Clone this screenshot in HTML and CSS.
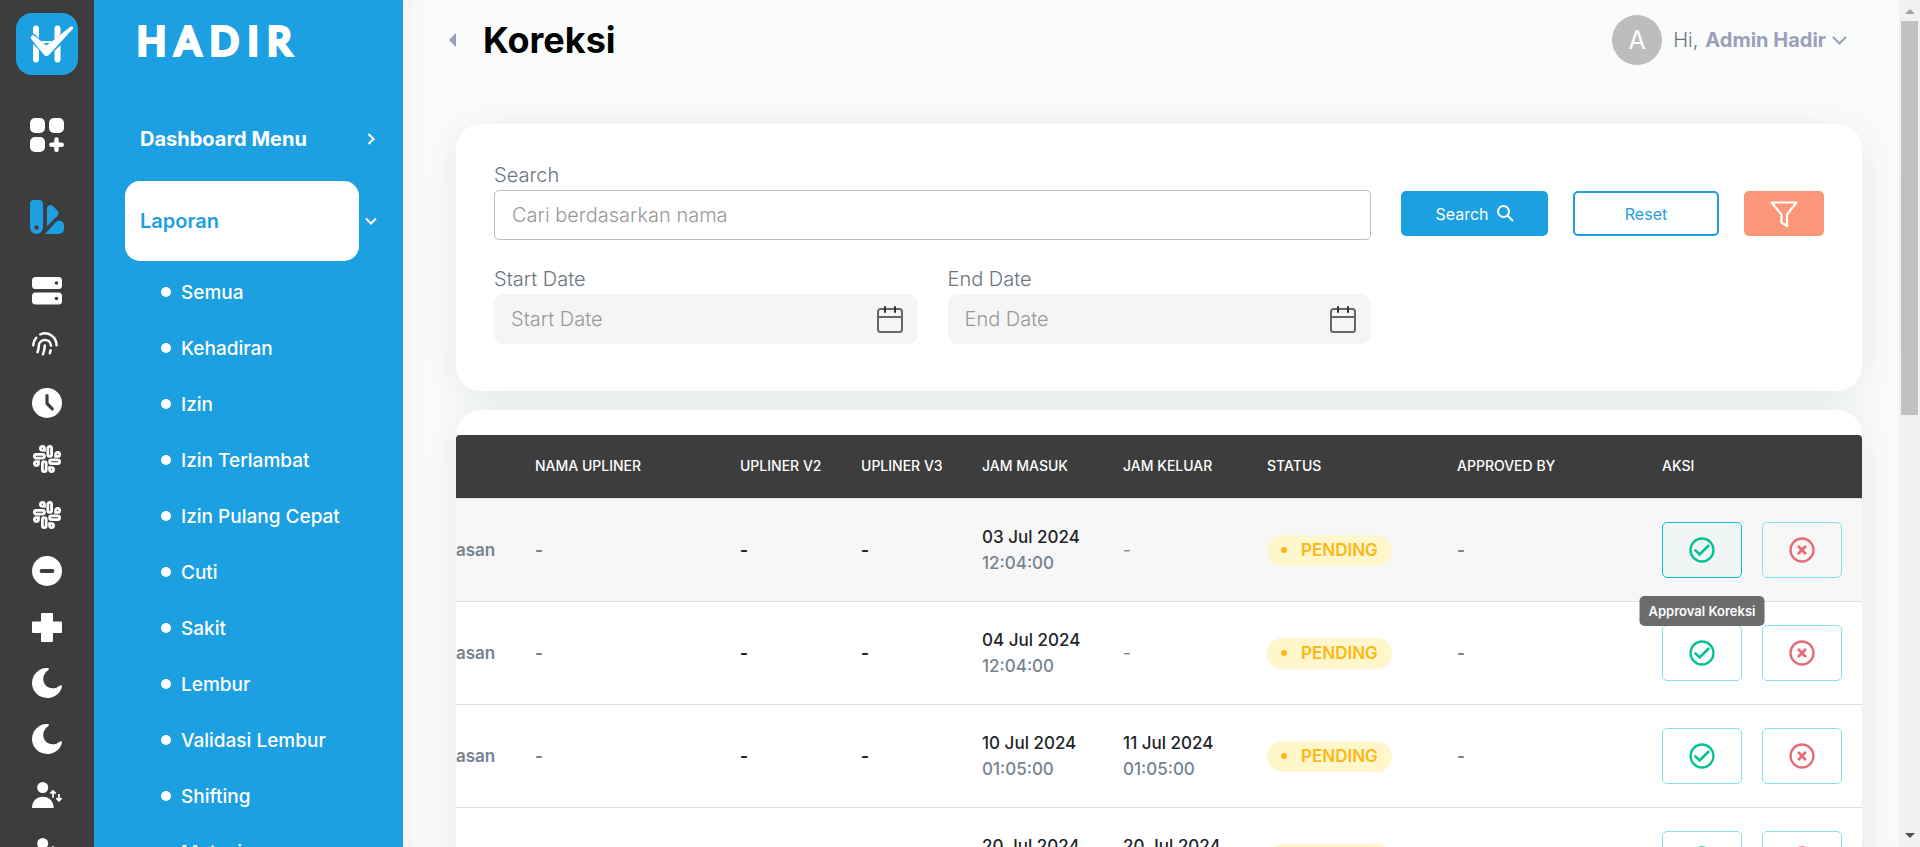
FILE: index.html
```html
<!DOCTYPE html>
<html lang="id">
<head>
<meta charset="utf-8">
<meta name="viewport" content="width=device-width, initial-scale=1">
<title>Koreksi</title>
<link rel="stylesheet" href="styles.css">
</head>
<body>
<svg class="defs" aria-hidden="true">
  <symbol id="slack" viewBox="0 0 28 28">
    <g fill="none" stroke="#fff" stroke-width="2.800">
      <rect x="14.8" y="1.4" width="3.800" height="10" rx="1.900"/><rect x="16.6" y="14.8" width="10" height="3.800" rx="1.900"/>
      <rect x="9.4" y="16.6" width="3.800" height="10" rx="1.900"/><rect x="1.4" y="9.4" width="10" height="3.800" rx="1.900"/>
      <path d="M11.4 5.4H9.4a2 2 0 1 1 2-2zM22.6 11.4V9.4a2 2 0 1 1 2 2zM16.6 22.6h2a2 2 0 1 1-2 2zM5.4 16.6v2a2 2 0 1 1-2-2z"/>
    </g>
  </symbol>
  <symbol id="moon" viewBox="0 0 30 30"><path fill="#fff" d="M15 0c1.6 0 2.500.6 1.500 1.900C12.500 4.500 11.300 8 11.300 11c0 5.500 4.200 9.300 9.200 9.300 3 0 5-1 7.300-2.600 1.500-1 2.500-.4 2.100 1.200C28.200 25.500 22.300 30 15 30A15 15 0 0 1 15 0z"/></symbol>
  <symbol id="shift" viewBox="0 0 30 26">
    <circle cx="10.700" cy="5.500" r="5.500" fill="#fff"/><path fill="#fff" d="M0 26c0-7 4.500-11.300 10.800-11.300S21.600 19 21.600 26z"/>
    <path fill="none" stroke="#fff" stroke-width="1.700" d="M21 15.800V9M18.300 11.600 21 8.900l2.700 2.700M27 12v6.600M24.300 16.200l2.700 2.700 2.700-2.700"/>
  </symbol>
  <symbol id="check" viewBox="0 0 26 26"><g fill="none" stroke="#00c292" stroke-width="2.300"><circle cx="13" cy="13" r="11.500"/><path stroke-width="2.600" stroke-linecap="round" d="M6.400 13.400l4.200 4 8.800-8.600"/></g></symbol>
  <symbol id="cross" viewBox="0 0 26 26"><g fill="none" stroke="#e46a76" stroke-width="2.300"><circle cx="13" cy="13" r="11.500"/><path stroke-width="2.800" stroke-linecap="round" d="M9.800 9.800l6.400 6.400M16.200 9.800l-6.400 6.400"/></g></symbol>
  <symbol id="calendar" viewBox="0 0 26 29"><path fill="none" stroke="#666" stroke-width="2" d="M3.500 4h19a2.500 2.500 0 0 1 2.500 2.500v18a2.500 2.500 0 0 1-2.500 2.500h-19A2.500 2.500 0 0 1 1 24.500v-18A2.500 2.500 0 0 1 3.500 4zM1 12h24"/><path stroke="#333" stroke-width="2" stroke-linecap="round" d="M8 2v5M18 2v5"/></symbol>
</svg>

<nav class="rail" aria-label="Modul">
  <a class="brand" href="#" aria-label="Hadir">
    <svg width="62" height="62" viewBox="0 0 62 62"><rect width="62" height="62" rx="16" fill="#1ca0e2"/>
      <path stroke="#fff" stroke-width="6" stroke-linecap="round" d="M20 15.500v31M41.500 15.500v31"/><path stroke="#fff" stroke-width="2" d="M26 29h9"/>
      <path fill="none" stroke="#1ca0e2" stroke-width="8" stroke-linejoin="round" stroke-linecap="round" d="M17 25l14 14.500L55 16.500"/>
      <path fill="#fff" d="M15.200 23.400c1-1.500 2.600-1.300 3.800-.2l11.500 9.200 24-18.600c1.800-1.200 3.500.6 2.200 2.200L33.400 41.500c-1.800 2-3.900 2-5.700 0L15.800 26.800c-.9-1.200-1.200-2.200-.6-3.400z"/></svg>
  </a>
  <a class="rail-lg" href="#" aria-label="Dashboard"><svg width="34" height="34" viewBox="0 0 34 34" fill="#fff"><rect width="15" height="15" rx="5"/><rect x="19" width="15" height="15" rx="5"/><rect y="19" width="15" height="15" rx="5"/><path stroke="#fff" stroke-width="4.500" stroke-linecap="round" d="M26.500 21.500v10.300M21.400 26.700h10.300"/></svg></a>
  <a class="rail-lg" href="#" aria-label="Laporan"><svg width="34" height="34" viewBox="0 0 34 34" fill="#1ca0e2"><path fill-rule="evenodd" d="M4 0h5a4 4 0 0 1 4 4v23.500a6.500 6.500 0 0 1-13 0V4a4 4 0 0 1 4-4zm2.500 25.200a2.200 2.200 0 1 0 0 4.400 2.200 2.200 0 0 0 0-4.400zM17 8.500c0-3 3.500-4.500 6-2.500l4 4.300c2 2 2 3.800.3 5.600L17 26.300zM27 20.800h2.500a4.500 4.500 0 0 1 4.500 4.500V29a5 5 0 0 1-5 5H15z"/></svg></a>
  <div class="rail-list">
    <a class="rail-sm" href="#" aria-label="Semua"><svg width="30" height="28" viewBox="0 0 30 28"><rect width="30" height="12" rx="3.500" fill="#fff"/><rect y="15.500" width="30" height="12" rx="3.500" fill="#fff"/><circle cx="24.500" cy="6" r="1.800" fill="#3d3d3d"/><circle cx="24.500" cy="21.500" r="1.800" fill="#3d3d3d"/></svg></a>
    <a class="rail-sm finger" href="#" aria-label="Kehadiran"><svg width="26" height="24" viewBox="0 0 26 24" fill="none" stroke="#fff" stroke-width="2.500" stroke-linecap="round"><path d="M1.300 13.300c.1-3 1-5.300 2.900-7.500M8.300 2.400c8.200-3.400 16.300 2.600 16.200 10.900M5.500 20.200c1-2 1.200-3.800 1.300-6.500.3-7 11.600-8 12.200 0M11 22.300c1.200-3 1.700-5.500 1.800-8.700M18.600 18.300l-.8 2.900"/></svg></a>
    <a class="rail-sm" href="#" aria-label="Izin"><svg width="30" height="30" viewBox="0 0 30 30"><circle cx="15" cy="15" r="15" fill="#fff"/><path fill="none" stroke="#3d3d3d" stroke-width="3.200" stroke-linecap="round" stroke-linejoin="round" d="M15 7.500v8l5.300 5.300"/></svg></a>
    <a class="rail-sm" href="#" aria-label="Izin Terlambat"><svg width="28" height="28"><use href="#slack"/></svg></a>
    <a class="rail-sm" href="#" aria-label="Izin Pulang Cepat"><svg width="28" height="28"><use href="#slack"/></svg></a>
    <a class="rail-sm" href="#" aria-label="Cuti"><svg width="30" height="30" viewBox="0 0 30 30"><circle cx="15" cy="15" r="15" fill="#fff"/><path stroke="#3d3d3d" stroke-width="3.800" stroke-linecap="round" d="M9.500 15h11"/></svg></a>
    <a class="rail-sm" href="#" aria-label="Sakit"><svg width="30" height="29" viewBox="0 0 30 29"><path fill="#fff" d="M10 0h10a1 1 0 0 1 1 1v7.500h8a1 1 0 0 1 1 1V19a1 1 0 0 1-1 1h-8v8a1 1 0 0 1-1 1H10a1 1 0 0 1-1-1v-8H1a1 1 0 0 1-1-1V9.500a1 1 0 0 1 1-1h8V1a1 1 0 0 1 1-1z"/></svg></a>
    <a class="rail-sm" href="#" aria-label="Lembur"><svg width="30" height="30"><use href="#moon"/></svg></a>
    <a class="rail-sm" href="#" aria-label="Validasi Lembur"><svg width="30" height="30"><use href="#moon"/></svg></a>
    <a class="rail-sm" href="#" aria-label="Shifting"><svg width="30" height="26"><use href="#shift"/></svg></a>
    <a class="rail-sm" href="#" aria-label="Mutasi"><svg width="30" height="26"><use href="#shift"/></svg></a>
  </div>
</nav>

<aside class="panel">
  <div class="wordmark">HADIR</div>
  <div class="group"><a class="group-link" href="#">Dashboard Menu</a><svg width="12" height="12" viewBox="0 0 12 12"><path d="M3.500 1l5 5-5 5"/></svg></div>
  <div class="group"><a class="group-link active" href="#">Laporan</a><svg width="12" height="12" viewBox="0 0 12 12"><path d="M1 3.500l5 5 5-5"/></svg></div>
  <ul class="submenu">
    <li><a href="#">Semua</a></li>
    <li><a href="#">Kehadiran</a></li>
    <li><a href="#">Izin</a></li>
    <li><a href="#">Izin Terlambat</a></li>
    <li><a href="#">Izin Pulang Cepat</a></li>
    <li><a href="#">Cuti</a></li>
    <li><a href="#">Sakit</a></li>
    <li><a href="#">Lembur</a></li>
    <li><a href="#">Validasi Lembur</a></li>
    <li><a href="#">Shifting</a></li>
    <li><a href="#">Mutasi</a></li>
  </ul>
</aside>

<main class="main">
  <header class="topbar">
    <button class="collapse" type="button" aria-label="Tutup menu"><svg width="7" height="14" viewBox="0 0 7 14"><path fill="#98a1b9" d="M7 0v14L0 7z"/></svg></button>
    <h1>Koreksi</h1>
    <button class="user" type="button"><span class="avatar">A</span><span class="hi">Hi,</span><strong>Admin Hadir</strong><svg width="15" height="9" viewBox="0 0 15 9"><path fill="none" stroke="#98a1b9" stroke-width="2" d="M1 1l6.500 6.500L14 1"/></svg></button>
  </header>

  <form class="card filters">
    <div class="fields">
      <div class="field wide"><label for="q">Search</label><input id="q" class="bordered" type="text" placeholder="Cari berdasarkan nama"></div>
      <div class="field"><label for="start">Start Date</label><div class="date"><input id="start" type="text" placeholder="Start Date"><svg width="26" height="29"><use href="#calendar"/></svg></div></div>
      <div class="field"><label for="end">End Date</label><div class="date"><input id="end" type="text" placeholder="End Date"><svg width="26" height="29"><use href="#calendar"/></svg></div></div>
    </div>
    <div class="actions">
      <button class="btn primary" type="button">Search <svg width="17" height="17" viewBox="0 0 17 17"><g fill="none" stroke="#fff" stroke-width="2"><circle cx="6.500" cy="6.500" r="5.500"/><path d="M10.500 10.500l5.500 5.500"/></g></svg></button>
      <button class="btn outline" type="reset">Reset</button>
      <button class="btn filter" type="button" aria-label="Filter"><svg width="28" height="26" viewBox="0 0 28 26"><path fill="none" stroke="#fff" stroke-width="2.200" stroke-linejoin="round" d="M1.500 1.500h25L17 13.500V25l-5.500-3.500v-8z"/></svg></button>
    </div>
  </form>

  <section class="card list">
    <table>
      <colgroup><col class="c-pos"><col class="c-name"><col class="c-up"><col class="c-up"><col class="c-in"><col class="c-out"><col class="c-status"><col class="c-name"><col class="c-act"></colgroup>
      <thead><tr><th></th><th>NAMA UPLINER</th><th>UPLINER V2</th><th>UPLINER V3</th><th>JAM MASUK</th><th>JAM KELUAR</th><th>STATUS</th><th>APPROVED BY</th><th>AKSI</th></tr></thead>
      <tbody>
        <tr class="hover"><td class="cut">asan</td><td class="dash">-</td><td class="dash dark">-</td><td class="dash dark">-</td><td><b>03 Jul 2024</b>12:04:00</td><td class="thin">-</td><td><span class="pill">PENDING</span></td><td class="dash">-</td>
          <td><div class="ops"><button class="op focus" type="button" aria-label="Approval Koreksi"><svg width="26" height="26"><use href="#check"/></svg><span class="tooltip" role="tooltip">Approval Koreksi</span></button><button class="op" type="button" aria-label="Tolak"><svg width="26" height="26"><use href="#cross"/></svg></button></div></td></tr>
        <tr><td class="cut">asan</td><td class="dash">-</td><td class="dash dark">-</td><td class="dash dark">-</td><td><b>04 Jul 2024</b>12:04:00</td><td class="thin">-</td><td><span class="pill">PENDING</span></td><td class="dash">-</td>
          <td><div class="ops"><button class="op" type="button" aria-label="Setujui"><svg width="26" height="26"><use href="#check"/></svg></button><button class="op" type="button" aria-label="Tolak"><svg width="26" height="26"><use href="#cross"/></svg></button></div></td></tr>
        <tr><td class="cut">asan</td><td class="dash">-</td><td class="dash dark">-</td><td class="dash dark">-</td><td><b>10 Jul 2024</b>01:05:00</td><td><b>11 Jul 2024</b>01:05:00</td><td><span class="pill">PENDING</span></td><td class="dash">-</td>
          <td><div class="ops"><button class="op" type="button" aria-label="Setujui"><svg width="26" height="26"><use href="#check"/></svg></button><button class="op" type="button" aria-label="Tolak"><svg width="26" height="26"><use href="#cross"/></svg></button></div></td></tr>
        <tr><td class="cut">asan</td><td class="dash">-</td><td class="dash dark">-</td><td class="dash dark">-</td><td><b>20 Jul 2024</b>01:05:00</td><td><b>20 Jul 2024</b>01:05:00</td><td><span class="pill">PENDING</span></td><td class="dash">-</td>
          <td><div class="ops"><button class="op" type="button" aria-label="Setujui"><svg width="26" height="26"><use href="#check"/></svg></button><button class="op" type="button" aria-label="Tolak"><svg width="26" height="26"><use href="#cross"/></svg></button></div></td></tr>
      </tbody>
    </table>
  </section>
</main>

<div class="scrollbar" aria-hidden="true">
  <svg width="10" height="5" viewBox="0 0 10 5"><path fill="#a3a3a3" d="M5 0l5 5H0z"/></svg>
  <div class="track"><div class="thumb"></div></div>
  <svg width="10" height="5" viewBox="0 0 10 5"><path fill="#505050" d="M0 0h10L5 5z"/></svg>
</div>
</body>
</html>
```

FILE: styles.css
```css
* { box-sizing: border-box; }

body {
  margin: 0;
  display: flex;
  height: 100vh;
  overflow: hidden;
  background: #fafcfb;
  color: #212529;
  font-family: Inter, "Liberation Sans", sans-serif;
  font-size: 20px;
}

a { color: inherit; text-decoration: none; }
button, input { font: inherit; }
button { cursor: pointer; }
svg { display: block; flex: none; }
.defs { position: absolute; width: 0; height: 0; }

/* icon rail */
.rail {
  flex: 0 0 94px;
  display: flex;
  flex-direction: column;
  align-items: center;
  overflow: hidden;
  background: #3d3d3d;
}
.brand { padding: 13px 0 19px; }
.rail-list { padding-top: 5px; }
.rail-lg, .rail-sm { flex: none; display: flex; align-items: center; justify-content: center; width: 60px; }
.rail-lg { height: 82px; }
.rail-sm { height: 56px; }
.finger { padding: 0 4px 6px 0; }

/* blue menu */
.panel {
  flex: 0 0 309px;
  z-index: 1;
  padding: 14px 22px 0 31px;
  overflow: hidden;
  background: #1ca0e2;
  color: #fff;
}
.wordmark {
  height: 84px;
  padding-left: 12px;
  font: 400 38px/52px Lato, sans-serif;
  letter-spacing: 9px;
  -webkit-text-stroke: 4px #fff;
  stroke-linejoin: round;
}
.group { display: flex; align-items: center; gap: 6px; height: 82px; }
.group svg { fill: none; stroke: #fff; stroke-width: 2; }
.group-link { width: 234px; padding: 0 15px; line-height: 80px; font-weight: 700; }
.group-link.active { border-radius: 15px; background: #fff; color: #1ca0e2; font-weight: 600; }
.submenu { margin: 0; padding: 2px 0 0 36px; list-style: none; font-size: 19px; }
.submenu a { display: flex; align-items: center; gap: 10px; height: 56px; font-weight: 500; white-space: nowrap; }
.submenu a::before { content: ""; width: 10px; height: 10px; border-radius: 50%; background: #fff; }

/* content */
.main {
  flex: 1;
  min-width: 0;
  padding: 0 37px 0 53px;
  overflow: hidden;
  box-shadow: inset 20px 0 30px -20px rgba(60, 60, 90, .08);
}
.topbar { display: flex; align-items: center; height: 80px; margin-bottom: 44px; }
.collapse { margin-left: -7px; padding: 0; border: 0; background: none; }
h1 { margin: 0 auto 0 27px; color: #000; font-size: 36px; line-height: 44px; font-weight: 700; }
.user { display: flex; align-items: center; margin-right: 15px; padding: 0; border: 0; background: none; color: #98a1b9; }
.avatar { width: 50px; height: 50px; margin-right: 11px; border-radius: 50%; background: #bdbdbd; color: #fff; font-size: 25px; line-height: 50px; }
.hi { margin-right: 7px; color: #6c757d; font-weight: 300; }
.user strong { margin-right: 6px; font-weight: 700; }

.card { border-radius: 25px; background: #fff; box-shadow: 0 7px 40px rgba(45, 55, 90, .1); }
.filters { display: flex; gap: 30px; padding: 37px 38px 47px; margin-bottom: 19px; }
.fields { flex: 1; display: grid; grid-template-columns: 1fr 1fr; gap: 25px 30px; }
.wide { grid-column: 1 / -1; }
.field label { display: block; padding-bottom: 1px; color: #6c757d; line-height: 28px; font-weight: 300; }
.field input {
  display: block;
  width: 100%;
  height: 50px;
  padding: 0 17px;
  border: 0;
  border-radius: 10px;
  outline: 0;
  background: #f5f5f5;
}
.field input.bordered { border: 1px solid #bdbdbd; border-radius: 5px; background: #fff; }
.field input::placeholder { color: #999; font-weight: 300; opacity: 1; }
.date { display: flex; align-items: center; padding-right: 15px; border-radius: 10px; background: #f5f5f5; }

.actions { flex: 0 0 423px; display: grid; grid-template-columns: 147px 1fr 80px; gap: 25px; align-items: start; padding-top: 30px; }
.btn {
  display: flex;
  align-items: center;
  justify-content: center;
  gap: 8px;
  height: 45px;
  padding: 0;
  border: 2px solid #1ca0e2;
  border-radius: 5px;
  font-size: 16px;
}
.primary { background: #1ca0e2; color: #fff; }
.outline { background: #fff; color: #1ca0e2; }
.filter { border-color: #fb9678; background: #fb9678; }

/* table */
.list { padding-top: 25px; height: 900px; }
table { width: 100%; border-collapse: separate; border-spacing: 0; table-layout: fixed; }
.c-pos { width: 4.48%; }
.c-name { width: 14.58%; }
.c-up { width: 8.61%; }
.c-in { width: 10.03%; }
.c-out { width: 10.24%; }
.c-status { width: 13.51%; }
.c-act { width: 15.36%; }
th {
  height: 64px;
  padding: 0 0 2px 16px;
  border-bottom: 1px solid #dee2e6;
  background: #3d3d3d;
  color: #fff;
  font-size: 14px;
  font-weight: 500;
  text-align: left;
}
th:first-child { border-top-left-radius: 4px; }
th:last-child { border-top-right-radius: 4px; }
td {
  height: 103px;
  padding: 0 0 0 16px;
  border-bottom: 1px solid #dedfe0;
  color: #76838f;
  font-size: 17px;
  line-height: 26px;
  font-weight: 500;
  white-space: nowrap;
}
td b { display: block; color: #212529; font-weight: 500; }
td.cut { padding: 0; font-weight: 600; }
td.dash { font-weight: 700; }
td.dark { color: #212529; }
td.thin { font-weight: 400; }
.hover td { background: #f7f7f7; }
.pill {
  display: inline-flex;
  align-items: center;
  gap: 14px;
  height: 31px;
  padding: 0 14px;
  border-radius: 16px;
  background: #fff6cc;
  color: #fdb714;
  font-weight: 600;
}
.pill::before { content: ""; width: 6px; height: 6px; border-radius: 50%; background: #fdb714; }
.ops { display: flex; gap: 20px; }
.op {
  position: relative;
  display: flex;
  align-items: center;
  justify-content: center;
  width: 80px;
  height: 56px;
  padding: 0;
  border: 1px solid #80e3ea;
  border-radius: 5px;
  background: transparent;
}
.op.focus { z-index: 1; border-color: #00c5d7; background: #f1f5f6; }
.tooltip {
  position: absolute;
  top: 100%;
  left: 50%;
  transform: translateX(-50%);
  margin-top: 19px;
  padding: 0 9px;
  border-radius: 5px;
  background: rgba(97, 97, 97, .93);
  color: #fff;
  font-size: 13px;
  line-height: 30px;
  font-weight: 600;
}

/* scrollbar column */
.scrollbar {
  flex: 0 0 21px;
  display: flex;
  flex-direction: column;
  align-items: center;
  gap: 7px;
  padding: 9px 0;
  background: #f1f1f1;
}
.track { flex: 1; }
.thumb { width: 17px; height: 49%; background: #c1c1c1; }
```
